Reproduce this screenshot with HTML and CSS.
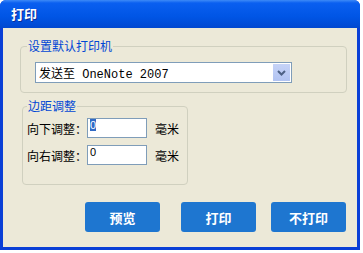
FILE: index.html
```html
<!DOCTYPE html>
<html lang="zh">
<head>
  <meta charset="UTF-8">
  <title>打印</title>
  <link rel="stylesheet" href="styles.css">
</head>
<body>
  <div class="window">
    <div class="titlebar">打印</div>
    <div class="content">
      <fieldset class="group printer">
        <legend>设置默认打印机</legend>
        <div class="select">
          <span class="select-text">发送至<span class="mono"> OneNote 2007</span></span>
          <span class="select-btn">
            <svg width="9" height="6" viewBox="0 0 9 6"><path d="M1 1 L4.5 4.5 L8 1" fill="none" stroke="#4d6185" stroke-width="2"/></svg>
          </span>
        </div>
      </fieldset>

      <fieldset class="group margins">
        <legend>边距调整</legend>
        <div class="row">
          <label>向下调整：</label>
          <span class="input"><span class="sel">0</span></span>
          <span class="unit">毫米</span>
        </div>
        <div class="row">
          <label>向右调整：</label>
          <span class="input">0</span>
          <span class="unit">毫米</span>
        </div>
      </fieldset>

      <div class="actions">
        <button class="btn">预览</button>
        <button class="btn btn-print">打印</button>
        <button class="btn btn-skip">不打印</button>
      </div>
    </div>
  </div>
</body>
</html>
```

FILE: styles.css
```css
body {
  margin: 0;
  background: #ffffff;
  font-family: "Noto Sans CJK SC", "Liberation Sans", sans-serif;
  font-size: 12px;
  color: #000;
}

.window {
  width: 354px;
  height: 247px;
  background: #0a3fd6;
  border-radius: 6px 6px 0 0;
  padding: 0 3px 3px 3px;
  display: flex;
  flex-direction: column;
}

.titlebar {
  height: 28px;
  line-height: 28px;
  margin: 0 -3px;
  padding-left: 11px;
  color: #fff;
  font-weight: bold;
  font-size: 13px;
  background: linear-gradient(#3d8af7 0, #0a5ff0 3px, #0055e5 60%, #0148d0 100%);
  border-radius: 6px 6px 0 0;
  text-shadow: 1px 1px 0 #0a2f9a;
}

.content {
  flex: 1;
  background: #ece9d8;
  padding: 10px 0 0 17px;
  display: flex;
  flex-direction: column;
}

.group {
  border: 1px solid #d0d0bf;
  border-radius: 4px;
  margin: 0;
  box-sizing: border-box;
}

.group legend {
  color: #0046d5;
  padding: 0 1px;
  font-size: 12px;
  line-height: 16px;
}

.printer {
  width: 327px;
  padding: 8px 0 9px 14px;
}

.printer legend {
  margin-left: -8px;
}

.select {
  width: 257px;
  height: 21px;
  box-sizing: border-box;
  border: 1px solid #7f9db9;
  background: #fff;
  display: flex;
  align-items: center;
  justify-content: space-between;
}

.select-text {
  padding-left: 3px;
  white-space: pre;
}

.mono {
  font-family: "Liberation Mono", monospace;
  font-size: 12px;
}

.select-btn {
  width: 17px;
  height: 17px;
  margin-right: 1px;
  background: linear-gradient(#c6d3f7, #b1c3f2);
  display: flex;
  align-items: center;
  justify-content: center;
}

.margins {
  width: 166px;
  margin-top: 5px;
  margin-left: 2px;
  padding: 4px 0 19px 4px;
}

.margins legend {
  margin-left: 0;
}

.row {
  display: flex;
  align-items: center;
}

.row + .row {
  margin-top: 7px;
}

.row label {
  white-space: nowrap;
  font-size: 12px;
  width: 60px;
}

.input {
  width: 60px;
  height: 20px;
  box-sizing: border-box;
  border: 1px solid #7f9db9;
  background: #fff;
  font-family: "Liberation Sans", sans-serif;
  font-size: 11px;
  line-height: 13px;
  padding-left: 2px;
}

.sel {
  background: #316ac5;
  color: #fff;
}

.unit {
  margin-left: 8px;
  font-size: 12px;
}

.actions {
  display: flex;
  margin-top: 17px;
  margin-left: 65px;
}

.btn {
  width: 75px;
  height: 30px;
  border: none;
  border-radius: 3px;
  background: #1e76d0;
  color: #fff;
  font-family: "Noto Sans CJK SC", sans-serif;
  font-size: 13px;
  font-weight: bold;
  padding: 0;
}

.btn-print {
  margin-left: 21px;
}

.btn-skip {
  margin-left: 15px;
}
```
